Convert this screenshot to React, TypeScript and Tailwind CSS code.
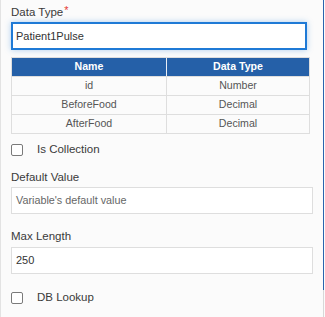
export default function App() {
  const rows = [
    ["id", "Number"],
    ["BeforeFood", "Decimal"],
    ["AfterFood", "Decimal"],
  ];
  const font = { fontFamily: '"Liberation Sans", Arial, sans-serif' };
  return (
    <div
      className="w-[325px] h-[317px] bg-[#fbfbfb] flex border-l border-[#e3e3e3] overflow-hidden"
      style={font}
    >
      <div className="flex-1 flex flex-col pl-[10px]">
        <div className="mt-[4px] h-[17px] leading-[17px] text-[11.5px] text-[#3a3a3a]">
          Data Type<span className="text-[#e53935] text-[11px] relative top-[-2px] ml-[1px]">*</span>
        </div>
        <div className="mt-[1px] w-[296px] h-[28px] bg-white border-2 border-[#1f7ad6] shadow-[0_0_6px_rgba(31,122,214,0.35)] flex items-center pl-[3px] text-[11px] text-[#333]">
          Patient1Pulse
        </div>
        <div className="mt-[7px] w-[299px] border border-[#dedede] text-[10.6px]">
          <div className="grid grid-cols-[155px_142px] h-[18px] bg-[#2560a8] text-white font-bold">
            <div className="flex items-center justify-center border-r border-[#e9eef6]">Name</div>
            <div className="flex items-center justify-center">Data Type</div>
          </div>
          {rows.map((r) => (
            <div
              key={r[0]}
              className="grid grid-cols-[155px_142px] h-[19px] border-t border-[#dedede] bg-[#fbfbfb] text-[#555]"
            >
              <div className="flex items-center justify-center border-r border-[#dedede]">{r[0]}</div>
              <div className="flex items-center justify-center">{r[1]}</div>
            </div>
          ))}
        </div>
        <div className="mt-[4px] h-[24px] flex items-center">
          <div className="w-[12px] h-[12px] rounded-[2px] border border-[#7a7a7a] bg-white"></div>
          <span className="ml-[14px] text-[11.5px] text-[#3a3a3a]">Is Collection</span>
        </div>
        <div className="mt-[7px] h-[17px] leading-[17px] text-[11.5px] text-[#3a3a3a]">Default Value</div>
        <div className="mt-[1px] w-[302px] h-[27px] bg-white border border-[#dedede] flex items-center pl-[4px] text-[10.8px] text-[#666]">
          Variable's default value
        </div>
        <div className="mt-[14px] h-[17px] leading-[17px] text-[11.5px] text-[#3a3a3a]">Max Length</div>
        <div className="mt-[2px] w-[302px] h-[27px] bg-white border border-[#dedede] flex items-center pl-[4px] text-[11px] text-[#333]">
          250
        </div>
        <div className="mt-[12px] h-[24px] flex items-center">
          <div className="w-[12px] h-[12px] rounded-[2px] border border-[#7a7a7a] bg-white"></div>
          <span className="ml-[14px] text-[11.5px] text-[#3a3a3a]">DB Lookup</span>
        </div>
      </div>
      <div className="w-[1px] flex flex-col">
        <div className="h-[290px] bg-[#2a63ad]"></div>
        <div className="flex-1 bg-[#d8d8d8]"></div>
      </div>
      <div className="w-[1px]"></div>
    </div>
  );
}
